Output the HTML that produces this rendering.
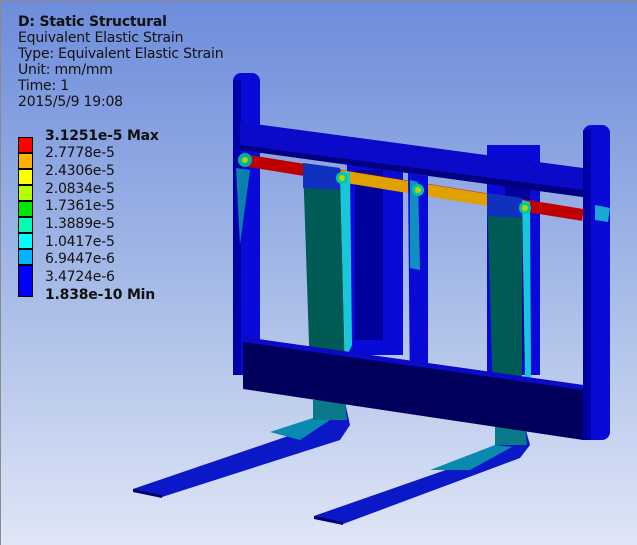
<!DOCTYPE html>
<html><head><style>
html,body{margin:0;padding:0}
body{width:637px;height:545px;overflow:hidden;position:relative;background:linear-gradient(#6d8cdb,#a9bde8 55%,#dfe6f6);font-family:"DejaVu Sans","Liberation Sans",sans-serif;color:#111}
.frame{position:absolute;left:0;top:0;width:636px;height:544px;border-left:1px solid #8a8a8a;border-top:1px solid #8a8a8a}
.t{position:absolute;left:18px;font-size:14px;line-height:16px;white-space:nowrap;letter-spacing:-0.2px}
.l{position:absolute;left:45px;font-size:14px;line-height:16px;white-space:nowrap;letter-spacing:-0.2px}
.b{position:absolute;left:18px;width:15px;height:16px;border:1px solid #000;box-sizing:border-box}
svg{position:absolute;left:0;top:0}
</style></head><body>
<div class="frame"></div>
<svg width="637" height="545" viewBox="0 0 637 545">
<polygon points="313,400 345,402 350,425 340,440 162,497 133,491 133,489 300,432 313,420" fill="#0a18c8"/>
<polygon points="270,432 313,418 330,420 300,440" fill="#0a8ab0"/>
<polygon points="313,400 345,402 347,420 313,420" fill="#0a7a8a"/>
<polygon points="133,489 162,495 162,498 133,492" fill="#000070"/>
<polygon points="495,425 525,427 530,445 520,458 343,524 314,518 314,516 480,458 495,445" fill="#0a18c8"/>
<polygon points="430,470 495,445 512,447 470,470" fill="#0a8ab0"/>
<polygon points="495,425 525,427 527,445 495,445" fill="#0a7a8a"/>
<polygon points="314,516 343,522 343,525 314,519" fill="#000070"/>
<rect x="347" y="160" width="56" height="195" fill="#0a0ad8"/>
<rect x="355" y="170" width="28" height="170" fill="#00009a"/>
<rect x="487" y="145" width="53" height="230" fill="#0a0ad8"/>
<rect x="505" y="160" width="25" height="200" fill="#00009a"/>
<rect x="233" y="73" width="27" height="302" rx="8" fill="#0a0ad8"/>
<rect x="233" y="80" width="8" height="295" fill="#0000a8"/>
<rect x="583" y="125" width="27" height="315" rx="8" fill="#0a0ad8"/>
<rect x="583" y="130" width="8" height="310" fill="#0000a8"/>
<polygon points="240,122 583,168 583,197 240,150" fill="#0a0ac8"/>
<polygon points="240,145 583,190 583,197 240,150" fill="#000080"/>
<line x1="243" y1="160" x2="583" y2="215" stroke="#c00000" stroke-width="12"/>
<line x1="340" y1="176" x2="488" y2="200" stroke="#e0a000" stroke-width="12"/>
<polygon points="303,163 340,168 345,373 310,373" fill="#005a55"/>
<polygon points="303,163 340,168 340,190 303,188" fill="#1030c0"/>
<polygon points="340,172 350,172 352,345 345,360" fill="#18c8d8"/>
<polygon points="487,193 522,198 522,402 493,400" fill="#005a55"/>
<polygon points="487,193 522,198 522,218 487,216" fill="#1030c0"/>
<polygon points="522,200 530,202 531,380 525,380" fill="#18c8d8"/>
<polygon points="408,173 428,176 428,400 410,398" fill="#0a0ad8"/>
<polygon points="410,180 418,182 420,270 410,268" fill="#1090c0"/>
<polygon points="243,337 583,385 583,440 243,389" fill="#00005c"/>
<polygon points="243,337 583,385 583,390 243,342" fill="#0a0ac8"/>
<circle cx="245" cy="160" r="7" fill="#00b0a0"/><circle cx="245" cy="160" r="3" fill="#b0d000"/>
<circle cx="342" cy="178" r="6" fill="#00c8a0"/><circle cx="342" cy="178" r="3" fill="#c0d000"/>
<circle cx="418" cy="190" r="6" fill="#00c8a0"/><circle cx="418" cy="190" r="3" fill="#c0d000"/>
<circle cx="525" cy="208" r="6" fill="#00c8a0"/><circle cx="525" cy="208" r="3" fill="#c0d000"/>
<polygon points="595,205 610,208 608,222 595,220" fill="#18a8d8"/>
<polygon points="236,168 250,170 240,245" fill="#0a80b0"/>
</svg>
<div class="t" style="top:14px;font-weight:bold">D: Static Structural</div>
<div class="t" style="top:30px">Equivalent Elastic Strain</div>
<div class="t" style="top:46px">Type: Equivalent Elastic Strain</div>
<div class="t" style="top:62px">Unit: mm/mm</div>
<div class="t" style="top:78px">Time: 1</div>
<div class="t" style="top:94px">2015/5/9 19:08</div>
<div class="b" style="top:137px;background:#ff0000"></div>
<div class="b" style="top:153px;background:#ffb000"></div>
<div class="b" style="top:169px;background:#ffff00"></div>
<div class="b" style="top:185px;background:#b4ff00"></div>
<div class="b" style="top:201px;background:#00e800"></div>
<div class="b" style="top:217px;background:#00ffb4"></div>
<div class="b" style="top:233px;background:#00ffff"></div>
<div class="b" style="top:249px;background:#00b4ff"></div>
<div class="b" style="top:265px;background:#0000ff;height:32px"></div>
<div class="l" style="top:128px;font-weight:bold">3.1251e-5 Max</div>
<div class="l" style="top:145px">2.7778e-5</div>
<div class="l" style="top:163px">2.4306e-5</div>
<div class="l" style="top:181px">2.0834e-5</div>
<div class="l" style="top:198px">1.7361e-5</div>
<div class="l" style="top:216px">1.3889e-5</div>
<div class="l" style="top:234px">1.0417e-5</div>
<div class="l" style="top:251px">6.9447e-6</div>
<div class="l" style="top:269px">3.4724e-6</div>
<div class="l" style="top:287px;font-weight:bold">1.838e-10 Min</div>
</body></html>
